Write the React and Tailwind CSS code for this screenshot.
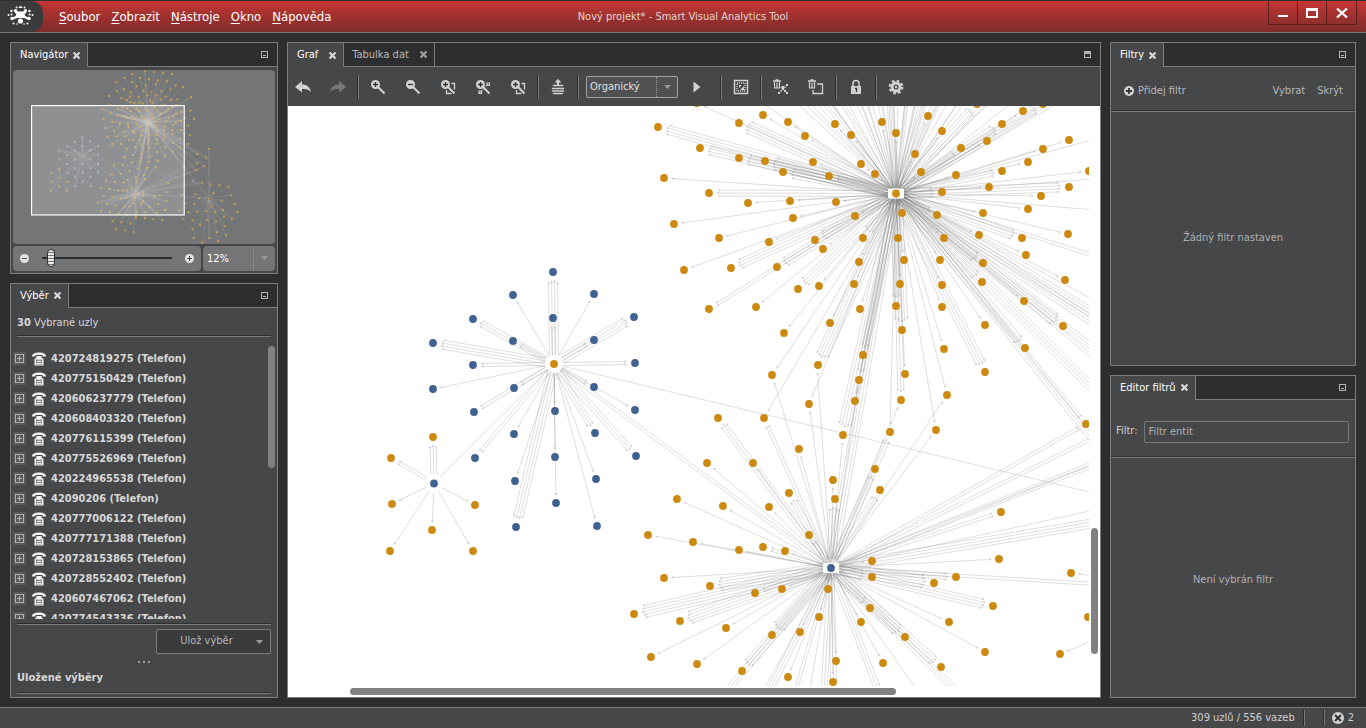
import React from 'react';

const ORANGE = '#cc8a11';
const BLUE = '#3f6291';

// Every cluster: a hub, its color, and the nodes around it as [x, y, number of links]
const clusters = [
  {
    hub: [896, 193.5],
    hubColor: ORANGE,
    color: ORANGE,
    start: 5,
    nodes: [
      [658, 127, 4], [700, 148, 4], [664, 178, 1], [709, 193, 3], [674, 224, 1], [719, 238, 1],
      [684, 270, 1], [709, 309, 2], [739, 123, 5], [763, 115, 1], [788, 122, 1], [805, 136, 1],
      [739, 158, 4], [765, 161, 5], [783, 172, 4], [748, 203, 1], [790, 201, 1], [793, 218, 1],
      [769, 242, 1], [731, 268, 4], [777, 267, 4], [815, 240, 4], [823, 249, 1], [798, 289, 4],
      [819, 286, 1], [756, 307, 1], [784, 333, 1], [830, 323, 1], [813, 162, 1], [829, 176, 2],
      [836, 202, 1], [835, 124, 1], [851, 135, 1], [861, 164, 1], [875, 174, 1], [855, 216, 1],
      [863, 238, 4], [859, 262, 1], [854, 284, 1], [860, 309, 1], [863, 355, 3], [818, 365, 5],
      [882, 122, 1], [896, 133, 1], [915, 154, 1], [921, 172, 1], [928, 116, 1], [942, 131, 1],
      [942, 192, 4], [902, 213, 1], [898, 238, 1], [904, 260, 1], [900, 284, 1], [896, 306, 3],
      [902, 330, 5], [937, 215, 3], [944, 238, 1], [940, 260, 1], [942, 285, 1], [942, 307, 1],
      [944, 349, 1], [961, 148, 2], [956, 175, 1], [989, 187, 1], [987, 141, 1], [1002, 124, 4],
      [1023, 111, 1], [977, 104, 4], [983, 213, 1], [979, 235, 1], [983, 263, 4], [982, 282, 4],
      [985, 325, 1], [1002, 171, 3], [1028, 162, 1], [1043, 149, 1], [1069, 140, 1], [1028, 209, 1],
      [1041, 196, 1], [1069, 187, 4], [1022, 238, 4], [1026, 255, 1], [1024, 301, 1], [1065, 280, 1],
      [1068, 234, 1], [1063, 326, 5], [1025, 348, 4], [1089, 171, 1], [697, 103, 1], [1043, 104, 4],
      [772, 375, 1], [809, 404, 1], [859, 380, 3], [855, 401, 1], [905, 374, 1], [901, 400, 3],
      [843, 435, 5], [890, 432, 1], [936, 430, 1], [947, 395, 1], [985, 372, 4], [764, 418, 1],
      [814, -58, 1], [879, -72, 3], [926, -69, 1], [974, -65, 2], [1021, -58, 1], [773, -38, 1],
      [731, -15, 2], [733, 32, 1], [693, 56, 1], [813, -17, 1], [854, -38, 2], [901, -31, 1],
      [947, -24, 2], [994, -20, 1], [1079, 9, 2], [1041, 2, 1], [837, 6, 1], [884, 1, 2],
      [936, -4, 1], [967, 30, 3], [1013, 22, 1], [914, 37, 2], [872, 29, 1], [804, 39, 2],
      [771, 20, 1], [893, 53, 1], [941, 53, 2], [988, 60, 1], [1049, 74, 1], [1121, 63, 3],
      [802, 60, 1], [757, 67, 1], [846, 63, 1], [785, 77, 1], [804, 89, 1], [825, 95, 1],
      [851, 91, 1], [870, 95, 1], [919, 91, 1], [907, 81, 1], [964, 74, 1], [1016, 77, 1],
      [1117, 133, 1], [1136, 176, 1], [1107, 211, 1], [1114, 262, 2], [1107, 307, 1],
      [1154, 361, 4], [1199, 378, 4], [1154, 408, 2], [1190, 424, 3], [1149, 444, 4], [1086, 424, 2],
    ],
  },
  {
    hub: [831, 568],
    hubColor: BLUE,
    color: ORANGE,
    start: 5,
    nodes: [
      [718, 418, 3], [799, 449, 1], [707, 463, 1], [753, 463, 1], [677, 499, 1], [723, 506, 1],
      [769, 507, 1], [789, 493, 3], [833, 480, 1], [835, 499, 4], [875, 469, 3], [880, 490, 3],
      [809, 535, 2], [648, 535, 1], [693, 542, 1], [739, 550, 1], [763, 547, 2], [785, 551, 1],
      [664, 578, 1], [710, 586, 5], [755, 593, 2], [782, 589, 1], [828, 589, 3], [634, 614, 5],
      [680, 621, 5], [726, 628, 1], [651, 657, 1], [697, 664, 1], [742, 671, 4], [772, 635, 5],
      [800, 632, 1], [819, 617, 1], [788, 677, 1], [836, 661, 1], [833, 682, 1], [861, 622, 1],
      [870, 608, 3], [883, 663, 1], [905, 637, 5], [941, 667, 4], [949, 622, 1], [985, 652, 1],
      [993, 606, 4], [934, 583, 5], [956, 577, 3], [872, 561, 1], [872, 577, 4], [999, 559, 1],
      [1001, 512, 2], [834, 692, 3], [710, 711, 3], [757, 716, 3], [804, 723, 1], [729, 752, 1],
      [776, 759, 2], [820, 766, 3], [880, 695, 3], [924, 700, 1], [971, 705, 3],
    ],
  },
  {
    hub: [554, 364],
    hubColor: ORANGE,
    color: BLUE,
    start: 9,
    nodes: [
      [553, 272, 4], [513, 295, 1], [594, 294, 1], [473, 319, 3], [634, 317, 4], [553, 318, 2],
      [513, 341, 2], [594, 340, 2], [433, 343, 4], [473, 365, 2], [635, 363, 2], [433, 389, 1],
      [514, 388, 2], [594, 387, 2], [474, 412, 2], [635, 410, 1], [555, 411, 1], [514, 434, 1],
      [595, 433, 3], [475, 458, 2], [636, 456, 3], [555, 457, 1], [515, 481, 1], [596, 479, 1],
      [556, 503, 1], [516, 527, 4], [597, 526, 1], [1131, 502, 1],
    ],
  },
  {
    hub: [434, 483.5],
    hubColor: BLUE,
    color: ORANGE,
    start: 9,
    nodes: [
      [433, 437, 3], [391, 458, 2], [392, 504, 1], [475, 505, 1], [432, 530, 1], [390, 551, 1],
      [473, 551, 1],
    ],
  },
  {
    hub: [1213, 591],
    hubColor: ORANGE,
    color: ORANGE,
    start: 9,
    nodes: [
      [1215, 333, 3], [1176, 509, 1], [1222, 518, 2], [1269, 523, 1], [1316, 531, 1], [1331, 575, 1],
      [1349, 620, 1], [1364, 664, 1], [1335, 698, 4], [1302, 784, 1], [1296, 737, 2], [1262, 815, 1],
      [1256, 768, 1], [1216, 798, 4], [1206, 705, 1], [1180, 822, 1], [1168, 728, 1], [1134, 799, 1],
      [1128, 752, 1], [1128, 707, 1], [1152, 660, 1], [1107, 664, 1], [1201, 658, 1], [1227, 634, 1],
      [1246, 665, 1], [1288, 651, 1], [1281, 603, 1], [1237, 564, 1], [1143, 570, 1], [1164, 591, 1],
      [1138, 622, 1], [1251, 712, 1], [1293, 686, 1], [1071, 573, 1], [1060, 654, 1], [1088, 617, 1],
      [1081, 700, 1],
    ],
  },
];

// Links that join two clusters: x1, y1, x2, y2, number of links
const bridges = [
  [434, 483, 554, 364, 1],
  [831, 568, 554, 364, 2],
  [831, 568, 896, 193, 4],
  [831, 568, 772, 375, 1],
  [831, 568, 817, 365, 1],
  [831, 568, 764, 418, 2],
  [831, 568, 809, 404, 1],
  [831, 568, 843, 435, 1],
  [831, 568, 859, 380, 1],
  [831, 568, 890, 432, 3],
  [831, 568, 901, 400, 1],
  [831, 568, 936, 430, 1],
  [831, 568, 947, 395, 1],
  [831, 568, 1086, 424, 2],
  [831, 568, 1149, 444, 2],
  [831, 568, 1154, 408, 2],
  [831, 568, 1190, 424, 2],
  [831, 568, 1131, 502, 1],
  [831, 568, 1176, 509, 4],
  [831, 568, 1213, 591, 2],
  [896, 193, 1213, 591, 3],
];

function linkPath([x1, y1], [x2, y2], count, start) {
  const dx = x2 - x1;
  const dy = y2 - y1;
  const length = Math.hypot(dx, dy);
  if (length < 20) return '';
  const ux = dx / length;
  const uy = dy / length;
  const parts = [];
  for (let i = 0; i < count; i++) {
    const shift = (i - (count - 1) / 2) * 3;
    const end = length - 8 - Math.abs(shift) / 2;
    const sx = x1 + ux * start - uy * shift;
    const sy = y1 + uy * start + ux * shift;
    const ex = x1 + ux * end - uy * shift;
    const ey = y1 + uy * end + ux * shift;
    parts.push(`M${sx.toFixed(1)} ${sy.toFixed(1)}L${ex.toFixed(1)} ${ey.toFixed(1)}`);
    // arrow head
    const bx = ex - ux * 2;
    const by = ey - uy * 2;
    parts.push(
      `M${(bx - uy).toFixed(1)} ${(by + ux).toFixed(1)}L${ex.toFixed(1)} ${ey.toFixed(1)}L${(bx + uy).toFixed(1)} ${(by - ux).toFixed(1)}`
    );
  }
  return parts.join('');
}

const linkLines = [
  ...clusters.flatMap((c) => c.nodes.map(([x, y, n]) => linkPath(c.hub, [x, y], n, c.start))),
  ...bridges.map(([x1, y1, x2, y2, n]) => linkPath([x1, y1], [x2, y2], n, 9)),
].join('');

const NetworkGraph = () => (
  <svg viewBox="288 106 802 580" preserveAspectRatio="xMinYMin slice" className="block w-full h-full">
    <path d={linkLines} fill="none" stroke="#808080" strokeWidth="0.5" strokeOpacity="0.5" />
    {clusters.map((c) => (
      <g key={c.hub.join()}>
        {c.nodes.map(([x, y]) => (
          <circle key={`${x}-${y}`} cx={x} cy={y} r="3.9" fill={x === 1131 ? BLUE : c.color} />
        ))}
        <rect x={c.hub[0] - 8} y={c.hub[1] - 5} width="16" height="10" rx="1" fill="#fff" />
        <circle cx={c.hub[0]} cy={c.hub[1]} r="3.9" fill={c.hubColor} />
      </g>
    ))}
  </svg>
);

const Minimap = () => (
  <svg viewBox="191 -79 1368 908" className="block w-full">
    <path d={linkLines} fill="none" stroke="#c4c4c4" strokeWidth="5" strokeOpacity="0.11" />
    {clusters.map((c) => (
      <g key={c.hub.join()}>
        {[...c.nodes, c.hub].map(([x, y]) => (
          <rect
            key={`${x}-${y}`}
            x={x - 5}
            y={y - 5}
            width="10"
            height="10"
            fill={c.color === BLUE ? '#9eb0cc' : '#dba944'}
            fillOpacity="0.85"
          />
        ))}
      </g>
    ))}
    <rect x="288" y="107" width="797" height="571" fill="#fff" fillOpacity="0.2" stroke="#fff" strokeWidth="6" />
  </svg>
);

const Logo = () => (
  <svg viewBox="0 0 28 21" className="w-7 h-[21px]" fill="#fff">
    <circle cx="13.5" cy="15" r="2.6" />
    <path d="M9 4.500l2.500 1h4l2.500-1 1.500 2-2 2 1.500 2 4 1.500-1 2-5-2h-7l-5 2-1-2L8 10.500l1.500-2-2-2z" />
    <circle cx="8.500" cy="4.500" r="1.600" />
    <circle cx="18.500" cy="4.500" r="1.600" />
    <circle cx="5" cy="12.500" r="1.700" />
    <circle cx="22" cy="12.500" r="1.700" />
    <ellipse cx="13.500" cy="1.200" rx="2" ry="0.900" />
    <circle cx="9.500" cy="1.500" r="0.900" />
    <circle cx="17.500" cy="1.500" r="0.900" />
    <circle cx="4.500" cy="5" r="1.200" />
    <circle cx="22.500" cy="5" r="1.200" />
    <circle cx="1.500" cy="9" r="1" />
    <circle cx="4.500" cy="8.500" r="1" />
    <circle cx="22.500" cy="8.500" r="1" />
    <circle cx="25.500" cy="9" r="1" />
    <circle cx="6.500" cy="17.500" r="1" />
    <circle cx="10" cy="18" r="0.8" />
    <circle cx="17" cy="18" r="0.8" />
    <circle cx="20.500" cy="17.500" r="1" />
  </svg>
);

const CloseIcon = () => (
  <svg viewBox="0 0 7 7" className="w-[7px] h-[7px]" stroke="currentColor" strokeWidth="2.200">
    <path d="M0.500 0.500l6 6M6.500 0.500l-6 6" />
  </svg>
);

const MinimizeIcon = ({ maximized }) => (
  <svg viewBox="0 0 7 7" className="w-[7px] h-[7px]" fill="none" stroke="#b4b4b4" shapeRendering="crispEdges">
    <rect x="0.500" y="0.500" width="6" height="6" />
    {maximized ? <path d="M0 1.500h7" strokeWidth="3" /> : <path d="M2 4.500h3" />}
  </svg>
);

const Caret = () => (
  <svg viewBox="0 0 7 4" className="w-[7px] h-1" fill="#9a9b9d">
    <path d="M0 0h7L3.500 4z" />
  </svg>
);

const magnifier = (
  <>
    <circle cx="5.500" cy="5.500" r="4.500" />
    <path d="M3 5.500h5M5.500 3v5" stroke="#333" strokeWidth="1.300" />
  </>
);

const trashCan = (
  <>
    <path d="M0 2h8M2.500 1h3" stroke="#d2d2d2" strokeWidth="1.300" />
    <path d="M1.500 3v6h5V3M4 3.500v5" fill="none" stroke="#d2d2d2" strokeWidth="1.200" />
  </>
);

const icons = {
  undo: <path d="M0 8l7-6v3.500c5 0 8 2.500 9 7.500-2-2.500-5-3.500-9-3v3.500z" />,
  redo: <path fill="#77787a" d="M16 8L9 2v3.500c-5 0-8 2.500-9 7.500 2-2.500 5-3.500 9-3v3.500z" />,
  zoomIn: (
    <>
      <path d="M8 8l6.500 6.500" stroke="#d2d2d2" strokeWidth="2" />
      {magnifier}
    </>
  ),
  zoomOut: (
    <>
      <path d="M8 8l6.500 6.500" stroke="#d2d2d2" strokeWidth="2" />
      <circle cx="5.500" cy="5.500" r="4.500" />
      <path d="M3 5.500h5" stroke="#333" strokeWidth="1.300" />
    </>
  ),
  zoomFit: (
    <>
      <path d="M11.500 4.500h3v6M6.500 11v3.500h5" fill="none" stroke="#d2d2d2" strokeWidth="1.300" />
      <path d="M8 8l6.500 6.500" stroke="#d2d2d2" strokeWidth="2" />
      {magnifier}
    </>
  ),
  zoomNodes: (
    <>
      <path d="M8 8l6.500 6.500" stroke="#d2d2d2" strokeWidth="2" />
      <path d="M5 13.500l3-3M11 7.500l2-2" stroke="#d2d2d2" />
      <path d="M12 4h2.500v2.500H12zM4 12h2.500v2.500H4z" fill="none" stroke="#d2d2d2" strokeWidth="1.200" />
      {magnifier}
    </>
  ),
  layers: (
    <>
      <path d="M8 0l3.500 3.500H9V6H7V3.500H4.500z" />
      <path d="M3.500 6.500h9M2.500 9.500h11M2.500 12h11M3.500 14.500h9" stroke="#d2d2d2" strokeWidth="1.500" strokeLinecap="round" />
    </>
  ),
  play: <path d="M4.500 2.500v11l7-5.500z" />,
  invert: (
    <>
      <path d="M1.500 1.500h13v13h-13z" fill="none" stroke="#d2d2d2" strokeWidth="1.500" />
      <path d="M4 4h8v8H4z" fill="none" stroke="#d2d2d2" strokeDasharray="1 1" strokeWidth="1.500" />
      <path d="M6 6h3L6 9zM11 7v4H7z" />
    </>
  ),
  trashNodes: (
    <>
      {trashCan}
      <path d="M8 8l6 6M14 6l-8 8" stroke="#d2d2d2" strokeDasharray="1.500 1" strokeWidth="1.600" />
      <path d="M13 5h2v2h-2zM9 7h2v2H9zM5 13h2v2H5zM13 13h2v2h-2zM11 11h2v2h-2zM9 9h2v2H9z" />
    </>
  ),
  trashArea: (
    <>
      {trashCan}
      <path d="M9 5h5.500v9.500H5V11" fill="none" stroke="#d2d2d2" strokeWidth="1.300" />
    </>
  ),
  lock: (
    <>
      <path d="M5 7V4.500a3 3 0 016 0V7" fill="none" stroke="#d2d2d2" strokeWidth="1.500" />
      <path d="M3 7h10v8H3z" />
      <path d="M7 9.500h1.500V13" fill="none" stroke="#333" strokeWidth="1.300" />
    </>
  ),
  gear: (
    <>
      <circle cx="8" cy="8" r="4" fill="none" stroke="#d2d2d2" strokeWidth="3" />
      <circle cx="8" cy="8" r="6.200" fill="none" stroke="#d2d2d2" strokeWidth="2.400" strokeDasharray="2.500 2.370" />
      <circle cx="8" cy="8" r="1.200" />
    </>
  ),
};

const ToolButton = ({ name, label }) => (
  <button aria-label={label} className="shrink-0">
    <svg viewBox="0 0 16 16" className="w-4 h-4" fill="#d2d2d2">
      {icons[name]}
    </svg>
  </button>
);

const Separator = () => <div className="w-0.5 h-6 -mx-2 shrink-0 bg-[#77787a] border-l border-[#2d2e30]" />;

const PhoneIcon = () => (
  <svg viewBox="0 0 16 14" className="w-4 h-3.5 shrink-0" fill="#f2f2f2">
    <path d="M1 4.500C1 1.500 4 0.500 8 0.500s7 1 7 4h-3.500V3h-7v1.500z" />
    <path d="M5.500 4h5v1.500l2 1.500v6.500h-9V7l2-1.500z" />
    <path d="M5 7.500h6v5H5z" fill="#6a6b6d" />
    <path d="M5 9.500h6M5 11.500h6M7 7v6M9 7v6" stroke="#f2f2f2" strokeWidth="0.700" />
  </svg>
);

const Divider = ({ className = '' }) => (
  <div className={`h-0.5 shrink-0 border-t border-[#2d2e30] bg-[#7c7d7f] ${className}`} />
);

const Panel = ({ tabs, maximized, className = '', children }) => (
  <section className={`flex flex-col min-h-0 border border-[#7c7d7f] bg-[#464749] ${className}`}>
    <div className="flex h-6 shrink-0 bg-[#2d2e30]">
      {tabs.map((tab, i) => (
        <div
          key={tab}
          className={`flex items-center pr-[7px] border-r border-[#7c7d7f] ${maximized ? 'gap-[11px]' : 'gap-[5px]'} ${
            i === 0 ? 'pl-[9px] bg-[#464749] text-white' : 'pl-2 border-b text-[#b8b8b8]'
          }`}
        >
          <button className="leading-4">{tab}</button>
          <button aria-label={`Zavřít ${tab}`} className={i === 0 ? 'text-[#d8d8d8]' : 'text-[#a0a0a0]'}>
            <CloseIcon />
          </button>
        </div>
      ))}
      <div className="flex flex-1 items-center justify-end pr-[9px] border-b border-[#7c7d7f]">
        <button aria-label="Minimalizovat">
          <MinimizeIcon maximized={maximized} />
        </button>
      </div>
    </div>
    {children}
  </section>
);

const phones = [
  '420724819275', '420775150429', '420606237779', '420608403320', '420776115399',
  '420775526969', '420224965538', '42090206', '420777006122', '420777171388',
  '420728153865', '420728552402', '420607467062', '420774543336',
];

const TitleBar = () => (
  <header className="relative flex h-[33px] shrink-0 items-center border-t border-b border-t-[#2d2e30] border-b-[#77787a] bg-linear-to-b from-[#c43633] to-[#7d2c2a]">
    <div className="flex h-full w-[43px] items-center justify-center rounded-r-xl bg-[#3a3b3d] pr-0.5">
      <Logo />
    </div>
    <nav className="flex gap-[11px] pl-4 text-[13px] leading-5 text-white">
      {['Soubor', 'Zobrazit', 'Nástroje', 'Okno', 'Nápověda'].map((item) => (
        <button key={item}>
          <span className="underline underline-offset-2">{item[0]}</span>
          {item.slice(1)}
        </button>
      ))}
    </nav>
    <h1 className="absolute inset-x-0 pt-px text-center text-[#e6d5d5] pointer-events-none">
      Nový projekt* - Smart Visual Analytics Tool
    </h1>
    <div className="ml-auto mr-[9px] flex h-6 self-start divide-x divide-[#5f1d1c] border border-t-0 border-[#5f1d1c]">
      <button aria-label="Minimalizovat okno" className="flex w-[29px] items-end justify-center pb-[7px]">
        <span className="h-0.5 w-2.5 bg-white" />
      </button>
      <button aria-label="Maximalizovat okno" className="flex w-[29px] items-center justify-center">
        <span className="h-2.5 w-3 border-2 border-t-[3px] border-white" />
      </button>
      <button aria-label="Zavřít okno" className="flex w-[29px] items-center justify-center">
        <svg viewBox="0 0 12 10" className="h-2.5 w-3" stroke="#fff" strokeWidth="2.200">
          <path d="M1 0.500l10 9M11 0.500l-10 9" />
        </svg>
      </button>
    </div>
  </header>
);

const Navigator = () => (
  <Panel tabs={['Navigátor']} className="shrink-0">
    <div className="p-0.5 pt-[3px]">
      <div className="rounded-sm bg-[#747577]">
        <Minimap />
      </div>
      <div className="mt-0.5 flex h-[25px] gap-0.5">
        <div className="flex flex-1 items-center rounded-sm bg-[#747577] px-[7px]">
          <button aria-label="Oddálit">
            <svg viewBox="0 0 9 9" className="h-[9px] w-[9px]">
              <circle cx="4.500" cy="4.500" r="4.500" fill="#e4e4e4" />
              <path d="M2 4.500h5" stroke="#444" />
            </svg>
          </button>
          <input
            type="range"
            aria-label="Přiblížení"
            defaultValue="4"
            className="mx-[13px] h-5 min-w-0 flex-1 appearance-none bg-[linear-gradient(#2d2e30,#2d2e30)] bg-[length:100%_2px] bg-center bg-no-repeat [&::-webkit-slider-thumb]:h-[18px] [&::-webkit-slider-thumb]:w-2 [&::-webkit-slider-thumb]:appearance-none [&::-webkit-slider-thumb]:rounded-sm [&::-webkit-slider-thumb]:border [&::-webkit-slider-thumb]:border-[#333] [&::-webkit-slider-thumb]:bg-[repeating-linear-gradient(#e8e8e8_0_2px,#777_2px_3px)]"
          />
          <button aria-label="Přiblížit">
            <svg viewBox="0 0 9 9" className="h-[9px] w-[9px]">
              <circle cx="4.500" cy="4.500" r="4.500" fill="#e4e4e4" />
              <path d="M2 4.500h5M4.500 2v5" stroke="#444" />
            </svg>
          </button>
        </div>
        <div className="relative w-[72px] rounded-sm bg-[#747577]">
          <select aria-label="Měřítko" className="h-full w-full appearance-none pt-px pl-1 text-white">
            <option>12%</option>
          </select>
          <div className="pointer-events-none absolute inset-y-0 right-0 flex w-[22px] items-center justify-center border-l border-dotted border-[#9a9b9d]">
            <Caret />
          </div>
        </div>
      </div>
    </div>
  </Panel>
);

const Selection = () => (
  <Panel tabs={['Výběr']} className="flex-1">
    <p className="px-1.5 pt-[7px] pb-1 leading-4 text-[#d8d8d8]">
      <b>30</b> Vybrané uzly
    </p>
    <Divider className="mx-1.5" />
    <div className="relative mt-[9px] min-h-0 flex-1 overflow-hidden pt-[3px]">
      <ul>
        {phones.map((phone) => (
          <li key={phone} className="flex h-5 items-center pl-0.5 font-bold text-[#d8d8d8]">
            <button aria-label={`Rozbalit ${phone}`} className="mr-[5px] bg-[#58595b] p-0.5">
              <svg viewBox="0 0 9 9" className="h-[9px] w-[9px]" fill="none" stroke="#b4b4b4" shapeRendering="crispEdges">
                <path d="M0.500 0.500h8v8h-8zM2 4.500h5M4.500 2v5" />
              </svg>
            </button>
            <PhoneIcon />
            <span className="ml-1">{phone} (Telefon)</span>
          </li>
        ))}
      </ul>
      <div className="absolute top-0 right-0.5 h-[122px] w-[7px] rounded-full bg-[#808183]" />
    </div>
    <Divider className="mx-1.5 mt-1" />
    <div className="flex justify-end px-1.5 pt-1">
      <button className="flex h-[25px] w-[115px] items-center rounded-xs border border-[#7c7d7f] bg-[#3a3b3d] text-[#b8b8b8]">
        <span className="flex-1">Ulož výběr</span>
        <span className="pr-[7px]">
          <Caret />
        </span>
      </button>
    </div>
    <div className="mt-[7px] flex justify-center gap-[3px]">
      {[0, 1, 2].map((dot) => (
        <span key={dot} className="h-0.5 w-0.5 bg-[#a0a0a0]" />
      ))}
    </div>
    <h2 className="px-1.5 pt-[7px] pb-1.5 leading-4 font-bold text-[#d8d8d8]">Uložené výběry</h2>
    <Divider className="mx-1.5 mb-[3px]" />
  </Panel>
);

const GraphPanel = () => (
  <Panel tabs={['Graf', 'Tabulka dat']} maximized className="min-w-0 flex-1">
    <div className="flex h-[39px] shrink-0 items-center gap-[19px] pl-[7px]">
      <ToolButton name="undo" label="Zpět" />
      <ToolButton name="redo" label="Znovu" />
      <Separator />
      <ToolButton name="zoomIn" label="Přiblížit" />
      <ToolButton name="zoomOut" label="Oddálit" />
      <ToolButton name="zoomFit" label="Přizpůsobit oknu" />
      <ToolButton name="zoomNodes" label="Přiblížit uzly" />
      <ToolButton name="zoomFit" label="Přiblížit výběr" />
      <Separator />
      <ToolButton name="layers" label="Sloučit" />
      <Separator />
      <div className="relative -ml-1 h-[22px] w-[92px] shrink-0 rounded-xs border border-[#a0a1a3] bg-[#505153]">
        <select aria-label="Rozložení" className="h-full w-full appearance-none pt-px pl-[3px] text-[#e0e0e0]">
          <option>Organický</option>
        </select>
        <div className="pointer-events-none absolute inset-y-0 right-0 flex w-[21px] items-center justify-center border-l border-dotted border-[#9a9b9d]">
          <Caret />
        </div>
      </div>
      <div className="-ml-2 mr-1 flex">
        <ToolButton name="play" label="Spustit" />
      </div>
      <Separator />
      <ToolButton name="invert" label="Obrátit výběr" />
      <Separator />
      <ToolButton name="trashNodes" label="Smazat uzly" />
      <ToolButton name="trashArea" label="Smazat oblast" />
      <Separator />
      <ToolButton name="lock" label="Zamknout" />
      <Separator />
      <ToolButton name="gear" label="Nastavení" />
    </div>
    <div className="grid min-h-0 flex-1 grid-cols-[1fr_11px] grid-rows-[1fr_11px] bg-white">
      <div className="min-h-0 min-w-0 overflow-hidden">
        <NetworkGraph />
      </div>
      <div className="flex justify-center pt-[422px]">
        <div className="h-[126px] w-[7px] rounded-full bg-[#808183]" />
      </div>
      <div className="flex items-center pl-[62px]">
        <div className="h-[7px] w-[546px] rounded-full bg-[#808183]" />
      </div>
    </div>
  </Panel>
);

const Filters = () => (
  <Panel tabs={['Filtry']} className="flex-1">
    <div className="flex h-[43px] shrink-0 items-center pr-3 pl-[13px] pt-[5px] text-[#b8b8b8]">
      <button className="flex items-center gap-1">
        <svg viewBox="0 0 10 10" className="h-2.5 w-2.5">
          <circle cx="5" cy="5" r="5" fill="#d2d2d2" />
          <path d="M2 5h6M5 2v6" stroke="#333" strokeWidth="1.800" />
        </svg>
        Přidej filtr
      </button>
      <button className="ml-auto">Vybrat</button>
      <button className="ml-3">Skrýt</button>
    </div>
    <Divider />
    <div className="flex flex-1 items-center justify-center text-[#b0b0b0]">Žádný filtr nastaven</div>
  </Panel>
);

const FilterEditor = () => (
  <Panel tabs={['Editor filtrů']} className="flex-1">
    <div className="flex h-14 shrink-0 items-center gap-[7px] pr-1.5 pl-[5px] pt-2">
      <label htmlFor="filter" className="text-[#d0d0d0]">Filtr:</label>
      <input
        id="filter"
        placeholder="Filtr entit"
        className="h-[22px] min-w-0 flex-1 rounded-xs border border-[#77787a] px-[3px] placeholder:text-[#b0b0b0]"
      />
    </div>
    <Divider />
    <div className="flex flex-1 items-center justify-center pt-1.5 text-[#b0b0b0]">Není vybrán filtr</div>
  </Panel>
);

const StatusBar = () => (
  <footer className="flex h-[21px] shrink-0 items-center justify-end border-t border-[#7c7d7f] bg-[#464749] pr-3 text-[#d0d0d0]">
    <span>309 uzlů / 556 vazeb</span>
    <span className="ml-2 h-4 w-0.5 border-l border-[#2d2e30] bg-[#77787a]" />
    <span className="ml-[18px] h-4 w-0.5 border-l border-[#2d2e30] bg-[#77787a]" />
    <svg viewBox="0 0 12 12" className="mr-1 ml-[7px] h-3 w-3">
      <circle cx="6" cy="6" r="6" fill="#d2d2d2" />
      <path d="M3 3l6 6M9 3l-6 6" stroke="#333" strokeWidth="2" />
    </svg>
    2
  </footer>
);

const App = () => (
  <div className="flex h-screen flex-col bg-[#2d2e30] font-['DejaVu_Sans_Condensed','Noto_Sans',sans-serif] text-[11px]">
    <TitleBar />
    <main className="flex min-h-0 flex-1 gap-[9px] px-2.5 py-[9px]">
      <div className="flex w-[268px] shrink-0 flex-col gap-[9px]">
        <Navigator />
        <Selection />
      </div>
      <GraphPanel />
      <div className="flex w-[246px] shrink-0 flex-col gap-[9px]">
        <Filters />
        <FilterEditor />
      </div>
    </main>
    <StatusBar />
  </div>
);

export default App;
